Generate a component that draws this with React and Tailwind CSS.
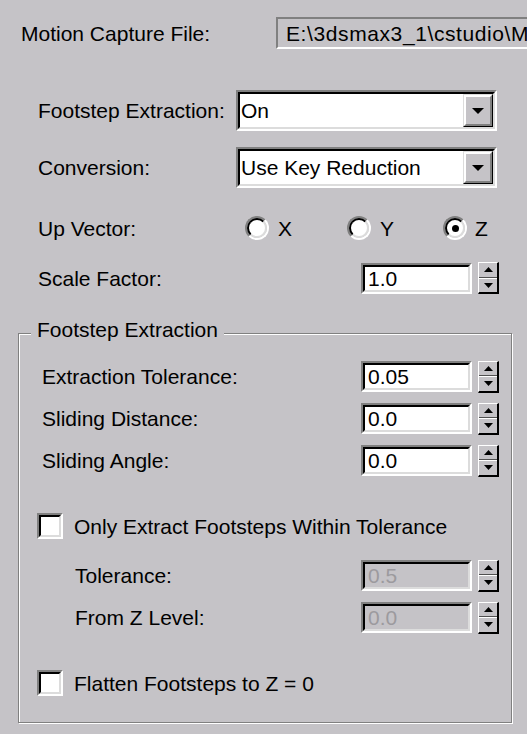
import React from "react";

// Classic Win32 property rollout: Motion Capture conversion parameters.

function Sunken({ className = "", inner = "bg-white", children }) {
  return (
    <div className={`border-2 border-t-[#808080] border-l-[#808080] border-b-white border-r-white ${className}`}>
      <div className={`h-full w-full border-2 border-t-black border-l-black border-b-[#dcdcdc] border-r-[#dcdcdc] ${inner}`}>
        {children}
      </div>
    </div>
  );
}

function Arrow({ dir = "down", w = 12, h = 6 }) {
  const pts = dir === "down" ? `0,0 ${w},0 ${w / 2},${h}` : `0,${h} ${w},${h} ${w / 2},0`;
  return (
    <svg width={w} height={h} viewBox={`0 0 ${w} ${h}`} className="block">
      <polygon points={pts} fill="#000" />
    </svg>
  );
}

function Combo({ value }) {
  return (
    <Sunken className="h-[41px] w-[261px] shrink-0">
      <div className="flex h-full">
        <span className="flex flex-1 items-center pl-[1px]">{value}</span>
        <div className="h-full w-[30px] border border-t-[#dcdcdc] border-l-[#dcdcdc] border-b-black border-r-black">
          <div className="flex h-full items-center justify-center border-2 border-t-white border-l-white border-b-[#808080] border-r-[#808080] bg-[#c5c3c7]">
            <Arrow dir="down" />
          </div>
        </div>
      </div>
    </Sunken>
  );
}

function SpinButtons() {
  return (
    <div className="ml-[6px] flex h-[32px] w-[21px] shrink-0 flex-col border-b-2 border-r-2 border-t border-l border-t-white border-l-white border-b-black border-r-black bg-[#c5c3c7]">
      <div className="flex flex-1 items-center justify-center border-b border-[#505050]">
        <Arrow dir="up" w={9} h={5} />
      </div>
      <div className="flex flex-1 items-center justify-center border-t border-white">
        <Arrow dir="down" w={9} h={5} />
      </div>
    </div>
  );
}

function Spinner({ value, disabled = false }) {
  return (
    <div className="flex items-center">
      <Sunken
        className="h-[31px] w-[111px] shrink-0"
        inner={disabled ? "bg-[#c5c3c7] text-[#9c9a9e]" : "bg-white"}
      >
        <div className="flex h-full items-center pl-[3px]">{value}</div>
      </Sunken>
      <SpinButtons />
    </div>
  );
}

function Radio({ checked }) {
  return (
    <div className="h-[24px] w-[24px] shrink-0 rounded-full border-2 border-t-[#808080] border-l-[#808080] border-b-white border-r-white">
      <div className="flex h-full w-full items-center justify-center rounded-full border-2 border-t-black border-l-black border-b-[#dcdcdc] border-r-[#dcdcdc] bg-white">
        {checked && <div className="h-[7px] w-[7px] rounded-full bg-black" />}
      </div>
    </div>
  );
}

function Checkbox({ label }) {
  return (
    <div className="flex h-[26px] items-center pl-[18px]">
      <Sunken className="h-[26px] w-[26px] shrink-0" />
      <span className="ml-[11px]">{label}</span>
    </div>
  );
}

function SpinRow({ label, value, indent = "pl-[23px]", disabled, className = "" }) {
  return (
    <div className={`flex h-[31px] items-center ${className}`}>
      <span className={`w-[342px] shrink-0 ${indent}`}>{label}</span>
      <Spinner value={value} disabled={disabled} />
    </div>
  );
}

export default function App() {
  return (
    <div className="h-[734px] w-[527px] overflow-hidden bg-[#c5c3c7] font-['Liberation_Sans',Arial,sans-serif] text-[21px] leading-none text-black">
      <div className="mt-[17px] flex h-[32px] items-center">
        <span className="w-[276px] shrink-0 pl-[21px]">Motion Capture File:</span>
        <div className="flex h-[32px] w-[300px] shrink-0 items-center overflow-hidden whitespace-nowrap border-2 border-t-[#808080] border-l-[#808080] border-b-white border-r-white pl-[8px] tracking-[0.6px]">
          {"E:\\3dsmax3_1\\cstudio\\M"}
        </div>
      </div>

      <div className="mt-[41px] flex items-center">
        <span className="w-[236px] shrink-0 pl-[38px]">Footstep Extraction:</span>
        <Combo value="On" />
      </div>

      <div className="mt-[16px] flex items-center">
        <span className="w-[236px] shrink-0 pl-[38px]">Conversion:</span>
        <Combo value="Use Key Reduction" />
      </div>

      <div className="mt-[28px] flex h-[24px] items-center">
        <span className="w-[245px] shrink-0 pl-[38px]">Up Vector:</span>
        <div className="flex w-[102px] shrink-0 items-center gap-[9px]">
          <Radio />
          <span>X</span>
        </div>
        <div className="flex w-[96px] shrink-0 items-center gap-[9px]">
          <Radio />
          <span>Y</span>
        </div>
        <div className="flex items-center gap-[8px]">
          <Radio checked />
          <span>Z</span>
        </div>
      </div>

      <div className="mt-[22px] flex h-[32px] items-center">
        <span className="w-[361px] shrink-0 pl-[38px]">Scale Factor:</span>
        <Spinner value="1.0" />
      </div>

      <div className="relative ml-[18px] mt-[39px] h-[390px] w-[494px] border border-[#808080] shadow-[inset_1px_1px_0_#fff,1px_1px_0_#fff]">
        <span className="absolute left-[12px] top-[-15px] bg-[#c5c3c7] px-[6px]">Footstep Extraction</span>

        <SpinRow label="Extraction Tolerance:" value="0.05" className="mt-[27px]" />
        <SpinRow label="Sliding Distance:" value="0.0" className="mt-[11px]" />
        <SpinRow label="Sliding Angle:" value="0.0" className="mt-[11px]" />

        <div className="mt-[37px]">
          <Checkbox label="Only Extract Footsteps Within Tolerance" />
        </div>

        <SpinRow label="Tolerance:" value="0.5" indent="pl-[56px]" disabled className="mt-[21px]" />
        <SpinRow label="From Z Level:" value="0.0" indent="pl-[56px]" disabled className="mt-[11px]" />

        <div className="mt-[37px]">
          <Checkbox label="Flatten Footsteps to Z = 0" />
        </div>
      </div>
    </div>
  );
}
